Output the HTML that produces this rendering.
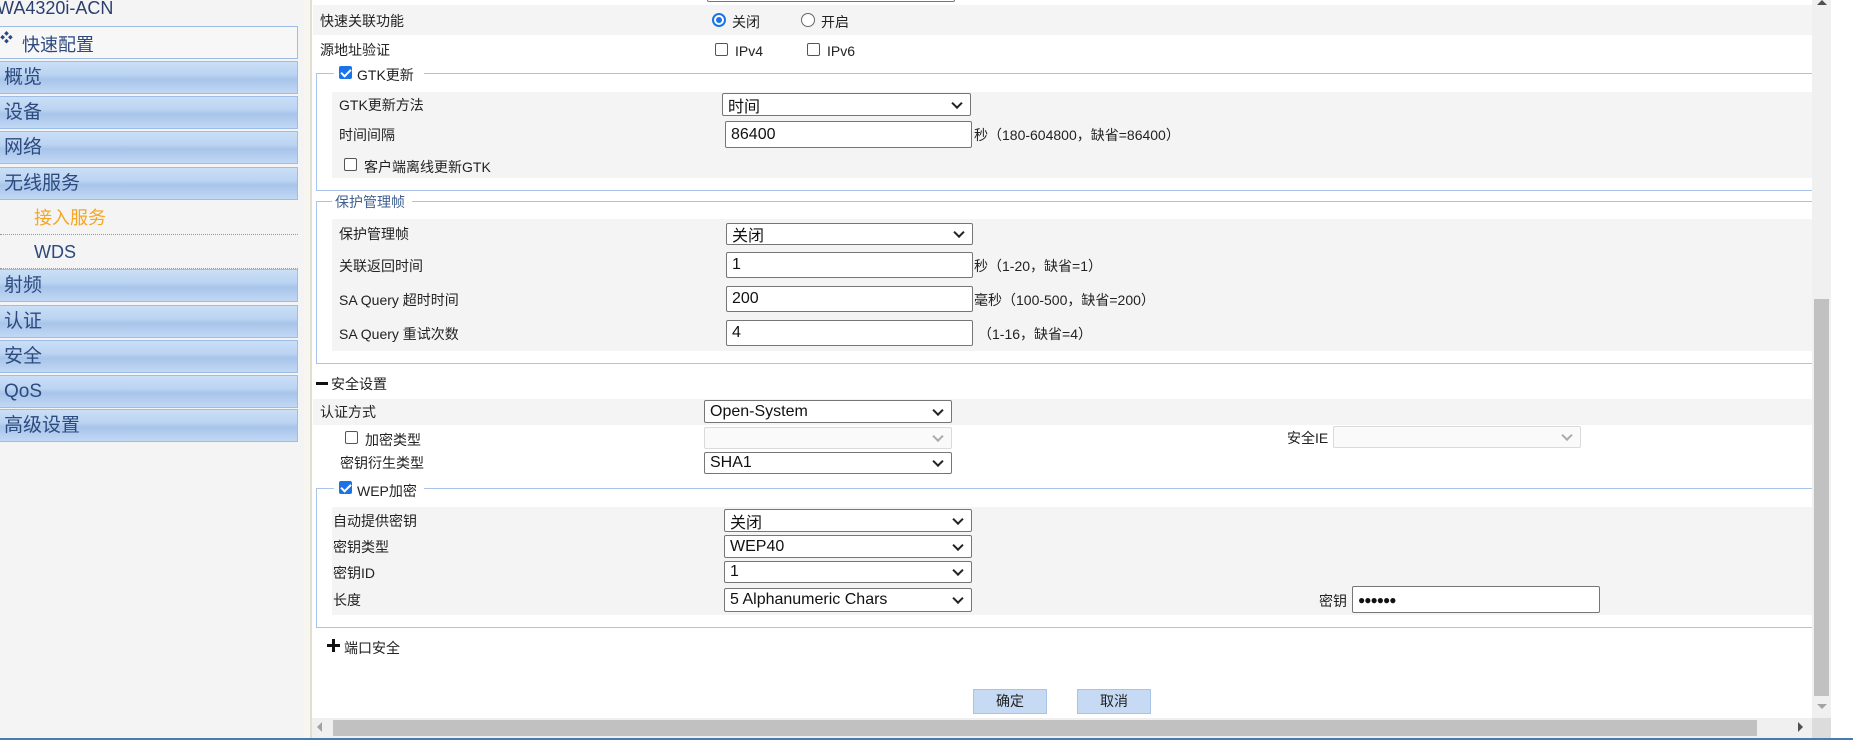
<!DOCTYPE html>
<html><head><meta charset="utf-8"><style>
*{box-sizing:border-box;margin:0;padding:0}
body{width:1853px;height:745px;position:relative;background:#fff;overflow:hidden;font-family:"Liberation Sans","Noto Sans CJK SC",sans-serif;font-size:14px;color:#222}
.a{position:absolute;white-space:nowrap}
#side{position:absolute;left:0;top:0;width:304px;height:738px;background:#f4f4f4}
.mi{position:absolute;left:0;width:298px;height:33px;border:1px solid #9dbde6;border-left:none;background:linear-gradient(#cadff7 0%,#bcd4f2 40%,#a7c4ea 55%,#c2d8f4 100%);color:#2c4a7e;font-size:19px;line-height:31px;padding-left:4px}
.sub{position:absolute;left:0;width:298px;height:34px;font-size:18px;line-height:34px;padding-left:34px;border-bottom:1px dotted #999}
.row{position:absolute;background:#f4f4f4}
.lab{position:absolute;white-space:nowrap;font-size:14px;transform:translateY(-50%)}
.sel,.inp{position:absolute;background:#fff;border:1px solid #767676;border-radius:2px;font-size:16px;padding-left:5px;color:#111;display:flex;align-items:center}
.sel:after{content:"";position:absolute;right:9px;top:50%;width:6px;height:6px;border-right:2px solid #222;border-bottom:2px solid #222;transform:translateY(-70%) rotate(45deg)}
.dis{background:#fafafa;border-color:#dadada}
.dis:after{border-color:#aaa}
.cb{position:absolute;width:13px;height:13px;border:1px solid #555;border-radius:2px;background:#fff}
.cbc{background:#1a73e8;border-color:#1a73e8}
.cbc:after{content:"";position:absolute;left:3px;top:0px;width:4px;height:8px;border-right:2px solid #fff;border-bottom:2px solid #fff;transform:rotate(45deg)}
.rd{position:absolute;width:14px;height:14px;border:1px solid #666;border-radius:50%;background:#fff}
.rdc{border:2px solid #1a73e8}
.rdc:after{content:"";position:absolute;left:2px;top:2px;width:6px;height:6px;border-radius:50%;background:#1a73e8}
.fs{position:absolute;left:316px;width:1496px;border:1px solid #a8c4ea;border-right:none}
.btn{position:absolute;height:25px;width:74px;background:#c6daf4;border:1px solid #a9c3e6;text-align:center;line-height:23px;font-size:14px;color:#222}
</style></head><body>
<div id="side">
<div class="a" style="left:-3px;top:-2px;font-size:18px;color:#2b3f6f">WA4320i-ACN</div>
<div class="a" style="left:0;top:26px;width:298px;height:33px;border:1px solid #9dbde6;border-left:none;background:#f7f7f7"></div>
<div class="a" style="left:0;top:27px;font-size:13px;color:#2b4a84">❖</div>
<div class="a" style="left:22px;top:31px;font-size:18px;color:#2c4a7e">快速配置</div>
<div class="mi" style="top:61px">概览</div>
<div class="mi" style="top:96px">设备</div>
<div class="mi" style="top:131px">网络</div>
<div class="mi" style="top:167px">无线服务</div>
<div class="sub" style="top:201px;color:#f5a623">接入服务</div>
<div class="sub" style="top:235px;color:#2c4a7e">WDS</div>
<div class="mi" style="top:269px">射频</div>
<div class="mi" style="top:305px">认证</div>
<div class="mi" style="top:340px">安全</div>
<div class="mi" style="top:375px">QoS</div>
<div class="mi" style="top:409px">高级设置</div>
</div>
<div class="a" style="left:304px;top:0;width:8px;height:738px;background:#f7f6f0;border-right:2px solid #e2dfd2"></div>

<div class="a" style="left:707px;top:-10px;width:248px;height:12px;border:1px solid #767676;border-radius:2px"></div>

<div class="row" style="left:313px;top:5px;width:1499px;height:30px"></div>
<div class="lab" style="left:320px;top:21px">快速关联功能</div>
<div class="rd rdc" style="left:712px;top:13px"></div><div class="lab" style="left:732px;top:22px">关闭</div>
<div class="rd" style="left:801px;top:13px"></div><div class="lab" style="left:821px;top:22px">开启</div>
<div class="lab" style="left:320px;top:50px">源地址验证</div>
<div class="cb" style="left:715px;top:43px"></div><div class="lab" style="left:735px;top:51px">IPv4</div>
<div class="cb" style="left:807px;top:43px"></div><div class="lab" style="left:827px;top:51px">IPv6</div>

<div class="fs" style="top:73px;height:118px"></div>
<div class="a" style="left:334px;top:64px;width:90px;height:18px;background:#fff"></div>
<div class="cb cbc" style="left:339px;top:66px"></div><div class="lab" style="left:357px;top:75px">GTK更新</div>
<div class="row" style="left:332px;top:92px;width:1480px;height:86px"></div>
<div class="lab" style="left:339px;top:105px">GTK更新方法</div>
<div class="sel" style="left:722px;top:93px;width:249px;height:23px">时间</div>
<div class="lab" style="left:339px;top:135px">时间间隔</div>
<div class="inp" style="left:725px;top:121px;width:247px;height:27px">86400</div>
<div class="lab" style="left:974px;top:135px">秒（180-604800，缺省=86400）</div>
<div class="cb" style="left:344px;top:158px"></div><div class="lab" style="left:364px;top:167px">客户端离线更新GTK</div>

<div class="fs" style="top:201px;height:163px"></div>
<div class="a" style="left:332px;top:192px;width:80px;height:18px;background:#fff"></div>
<div class="lab" style="left:335px;top:202px;color:#3e5f8f">保护管理帧</div>
<div class="row" style="left:332px;top:219px;width:1480px;height:132px"></div>
<div class="lab" style="left:339px;top:234px">保护管理帧</div>
<div class="sel" style="left:726px;top:223px;width:247px;height:22px">关闭</div>
<div class="lab" style="left:339px;top:266px">关联返回时间</div>
<div class="inp" style="left:726px;top:252px;width:247px;height:26px">1</div>
<div class="lab" style="left:974px;top:266px">秒（1-20，缺省=1）</div>
<div class="lab" style="left:339px;top:300px">SA Query 超时时间</div>
<div class="inp" style="left:726px;top:286px;width:247px;height:26px">200</div>
<div class="lab" style="left:974px;top:300px">毫秒（100-500，缺省=200）</div>
<div class="lab" style="left:339px;top:334px">SA Query 重试次数</div>
<div class="inp" style="left:726px;top:320px;width:247px;height:26px">4</div>
<div class="lab" style="left:978px;top:334px">（1-16，缺省=4）</div>

<div class="a" style="left:316px;top:382px;width:12px;height:3px;background:#111"></div>
<div class="lab" style="left:331px;top:384px">安全设置</div>
<div class="row" style="left:313px;top:399px;width:1499px;height:26px"></div>
<div class="lab" style="left:320px;top:412px">认证方式</div>
<div class="sel" style="left:704px;top:400px;width:248px;height:23px">Open-System</div>
<div class="cb" style="left:345px;top:431px"></div><div class="lab" style="left:365px;top:440px">加密类型</div>
<div class="sel dis" style="left:704px;top:427px;width:248px;height:22px"></div>
<div class="lab" style="left:1287px;top:438px">安全IE</div>
<div class="sel dis" style="left:1333px;top:426px;width:248px;height:22px"></div>
<div class="lab" style="left:340px;top:463px">密钥衍生类型</div>
<div class="sel" style="left:704px;top:452px;width:248px;height:22px">SHA1</div>

<div class="fs" style="top:488px;height:140px"></div>
<div class="a" style="left:334px;top:479px;width:90px;height:18px;background:#fff"></div>
<div class="cb cbc" style="left:339px;top:481px"></div><div class="lab" style="left:357px;top:491px">WEP加密</div>
<div class="row" style="left:332px;top:507px;width:1480px;height:108px"></div>
<div class="lab" style="left:333px;top:521px">自动提供密钥</div>
<div class="sel" style="left:724px;top:509px;width:248px;height:23px">关闭</div>
<div class="lab" style="left:333px;top:547px">密钥类型</div>
<div class="sel" style="left:724px;top:535px;width:248px;height:23px">WEP40</div>
<div class="lab" style="left:333px;top:573px">密钥ID</div>
<div class="sel" style="left:724px;top:561px;width:248px;height:22px">1</div>
<div class="lab" style="left:333px;top:600px">长度</div>
<div class="sel" style="left:724px;top:588px;width:248px;height:24px">5 Alphanumeric Chars</div>
<div class="lab" style="left:1319px;top:601px">密钥</div>
<div class="inp" style="left:1352px;top:586px;width:248px;height:27px;font-size:12px;letter-spacing:-1px">●●●●●●</div>

<div class="a" style="left:327px;top:644px;width:13px;height:3px;background:#111"></div>
<div class="a" style="left:332px;top:639px;width:3px;height:13px;background:#111"></div>
<div class="lab" style="left:344px;top:648px">端口安全</div>

<div class="btn" style="left:973px;top:689px">确定</div>
<div class="btn" style="left:1077px;top:689px">取消</div>

<div class="a" style="left:312px;top:718px;width:1500px;height:20px;background:#f0f0f0"></div>
<div class="a" style="left:333px;top:720px;width:1424px;height:16px;background:#c1c1c1"></div>
<div class="a" style="left:317px;top:722px;width:0;height:0;border-top:5px solid transparent;border-bottom:5px solid transparent;border-right:5px solid #a3a3a3"></div>
<div class="a" style="left:1798px;top:722px;width:0;height:0;border-top:5px solid transparent;border-bottom:5px solid transparent;border-left:5px solid #505050"></div>
<div class="a" style="left:1812px;top:0;width:19px;height:718px;background:#f0f0f0"></div>
<div class="a" style="left:1814px;top:299px;width:15px;height:397px;background:#c1c1c1"></div>
<div class="a" style="left:1817px;top:0px;width:0;height:0;border-left:5px solid transparent;border-right:5px solid transparent;border-bottom:5px solid #505050"></div>
<div class="a" style="left:1817px;top:704px;width:0;height:0;border-left:5px solid transparent;border-right:5px solid transparent;border-top:5px solid #a3a3a3"></div>
<div class="a" style="left:1812px;top:718px;width:19px;height:20px;background:#dcdcdc"></div>
<div class="a" style="left:0;top:738px;width:1853px;height:2px;background:#4a7bb0"></div>
</body></html>
